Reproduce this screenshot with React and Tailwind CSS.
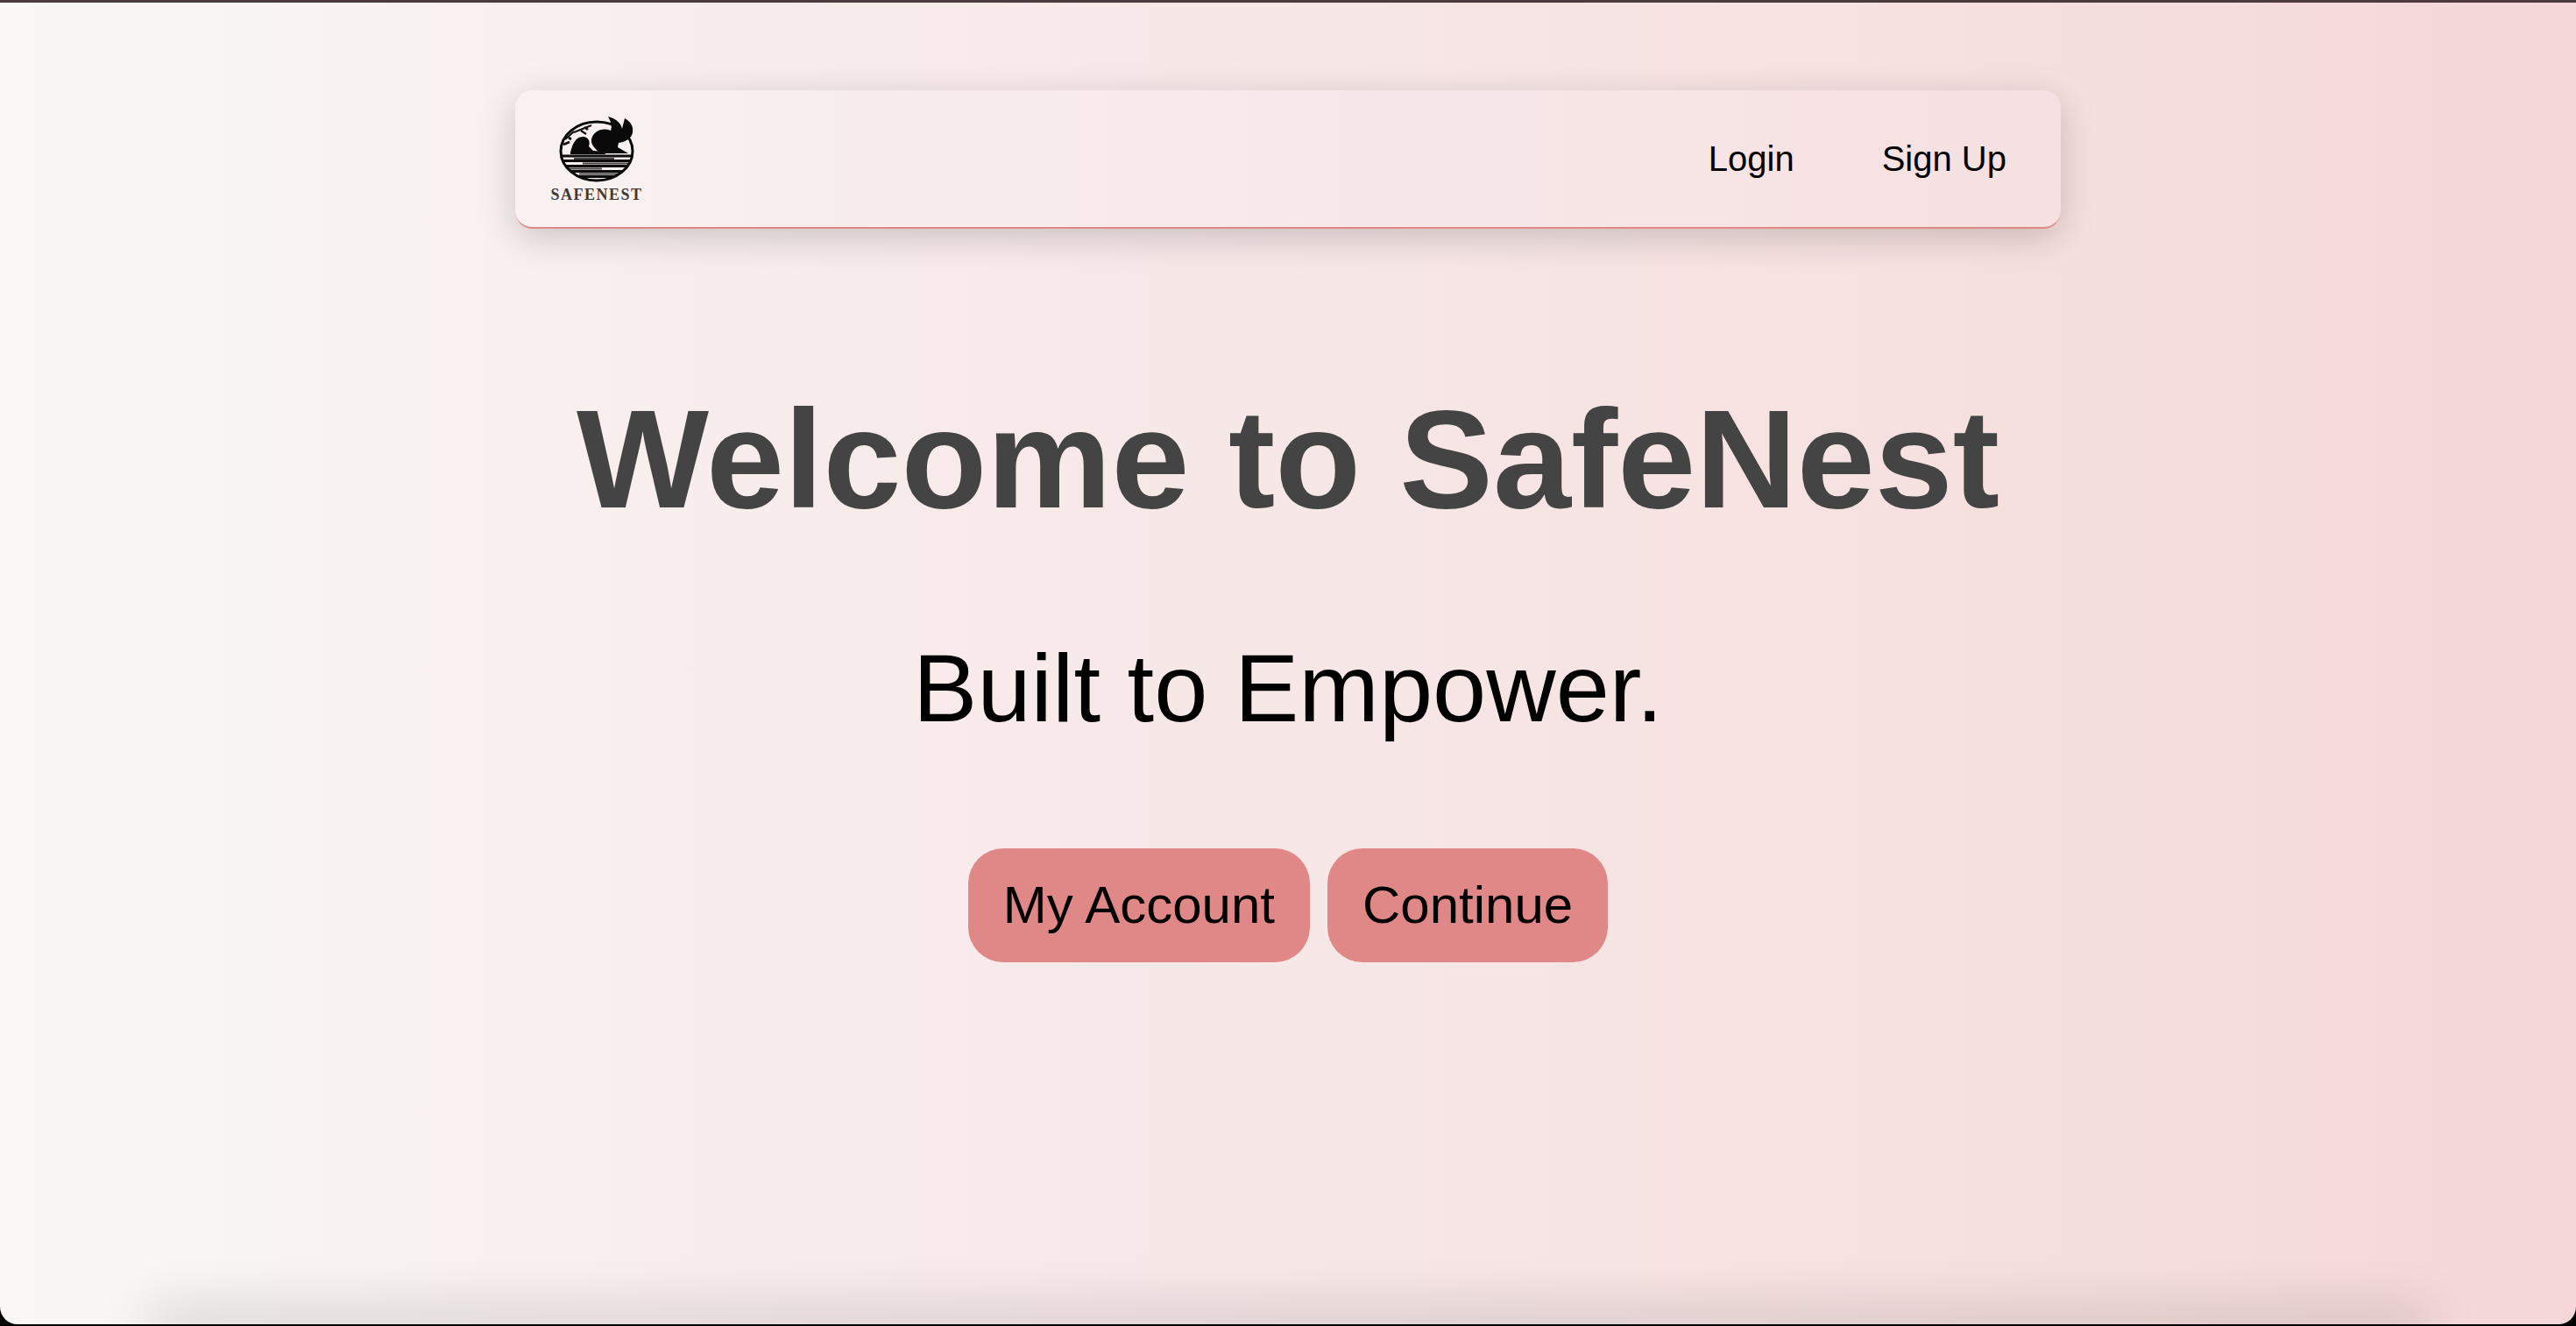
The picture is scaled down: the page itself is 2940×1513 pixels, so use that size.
import React from "react";

const sans = { fontFamily: "'Liberation Sans', Arial, sans-serif" };

const Logo = () => (
  <div className="flex flex-col items-center pb-[4px]">
    <svg viewBox="0 0 112 86" className="w-[112px] h-[86px] blur-[0.6px]">
      <defs>
        <clipPath id="ring">
          <ellipse cx="56" cy="43.5" rx="41" ry="33.5" />
        </clipPath>
      </defs>
      <g clipPath="url(#ring)">
        {/* small bird and the far shore */}
        <path d="M26 45C28 36 32 27 40 27C47 27 49 33 47 38L52 43L66 44L66 47L26 47Z" fill="#0a0a0a" />
        {/* branches */}
        <path d="M20 30L30 21M30 22L50 14M38 20L44 24" stroke="#111" strokeWidth="2.2" fill="none" />
        <path d="M18 36L25 33M24 28L27 30M42 16L46 19" stroke="#111" strokeWidth="2.8" fill="none" />
        {/* water */}
        <path d="M10 49H100M10 54.5H100M10 60.5H100M10 66.5H100M10 72.5H100" stroke="#0d0d0d" strokeWidth="3" />
        <path d="M30 52H76M40 57.5H100M10 63.5H62M36 69.5H86" stroke="#444" strokeWidth="1.8" />
      </g>
      <ellipse cx="56" cy="43.5" rx="41" ry="33.5" fill="none" stroke="#0a0a0a" strokeWidth="3" />
      {/* big bird */}
      <path
        d="M50 30C52 21 62 16 72 20C74 15 72 9 69 4C78 6 84 12 85 18C86 14 87 10 88 6C95 10 98 15 97 22C96 29 89 33 81 34L80 39L92 46L60 46C55 41 49 37 50 30Z"
        fill="#0a0a0a"
      />
    </svg>
    <span
      className="text-[18px] leading-[14px] font-bold tracking-[1.5px] text-[#3a3a3a]"
      style={{ fontFamily: "'Liberation Serif', serif" }}
    >
      SAFENEST
    </span>
  </div>
);

export default function App() {
  return (
    <div className="h-screen flex flex-col pb-[2px] bg-black" style={sans}>
      <div className="relative flex-1 flex flex-col overflow-hidden rounded-b-[20px] border-t-[3px] border-t-[#4b3a3e] bg-[linear-gradient(to_right,#f9f8f6_0%,#f8eeed_25%,#f7e7e7_50%,#f5dfdd_82%,#f5d7d9_100%)]">
        <div className="flex flex-col items-center flex-1">
          <nav className="w-[60%] h-[158px] mt-[100px] shrink-0 flex items-center justify-between pl-[37px] pr-[62px] rounded-[20px] border-b-2 border-b-[#e08888] bg-[linear-gradient(to_right,#f9f1f1,#f6e0e1)] shadow-[0_10px_40px_rgba(0,0,0,0.18)]">
            <Logo />
            <div className="flex items-center gap-[100px] text-[40px] leading-none text-black">
              <a>Login</a>
              <a>Sign Up</a>
            </div>
          </nav>

          <h1 className="mt-[171px] text-[160px] leading-[184px] font-bold text-[#444]">
            Welcome to SafeNest
          </h1>
          <p className="mt-[105px] text-[110px] leading-[128px] text-black">Built to Empower.</p>

          <div className="mt-[119px] flex gap-[20px]">
            <button className="h-[130px] px-[40px] rounded-[40px] bg-[#e08888] text-[60px] text-black">
              My Account
            </button>
            <button className="h-[130px] px-[40px] rounded-[40px] bg-[#e08888] text-[60px] text-black">
              Continue
            </button>
          </div>
        </div>
        <footer className="h-0 mx-[180px] shadow-[0_0_60px_14px_rgba(0,0,0,0.2)]" />
      </div>
    </div>
  );
}
